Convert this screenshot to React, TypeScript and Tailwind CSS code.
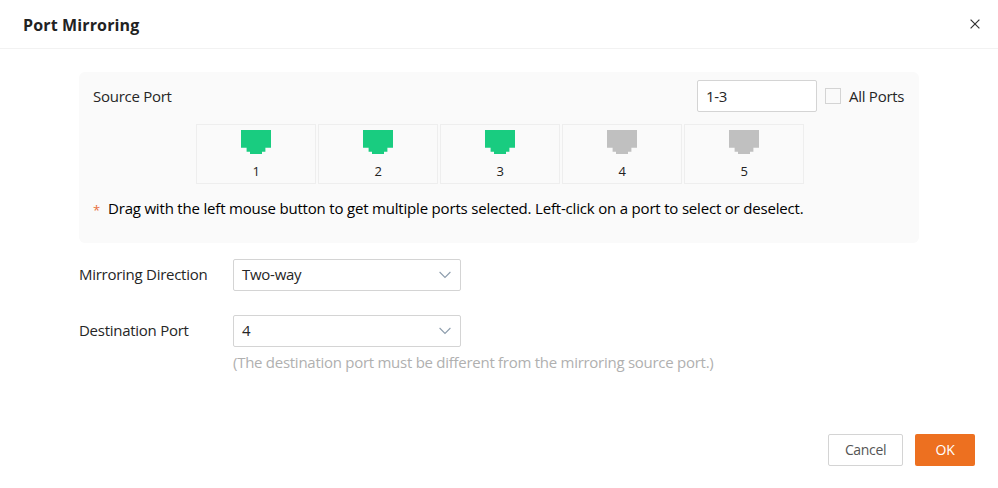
import { useState } from "react";

function PortIcon({ active }: { active: boolean }) {
  return (
    <svg
      width="30"
      height="24"
      viewBox="0 0 30 24"
      className={active ? "text-[#19cc80]" : "text-[#c0c0c0]"}
      aria-hidden="true"
    >
      <path d="M0 0H30V17.7H24.4V21.8H21V24H9V21.8H5.6V17.7H0Z" fill="currentColor" />
    </svg>
  );
}

function PortCell({ port, active, onToggle }: { port: number; active: boolean; onToggle: () => void }) {
  return (
    <button
      type="button"
      onClick={onToggle}
      className="flex h-[60px] w-[120px] flex-col items-center border border-[#eeeeee] pt-[5px]"
    >
      <PortIcon active={active} />
      <span className="mt-[9px] text-[13px] leading-4 text-[#222]">{port}</span>
    </button>
  );
}

function SelectBox({ value }: { value: string }) {
  return (
    <div className="flex h-8 w-[228px] items-center justify-between rounded-[2px] border border-[#d4d4d4] bg-white pr-[9px] pl-2">
      <span className="pb-[2px]">{value}</span>
      <svg width="12" height="8" viewBox="0 0 12 8" fill="none" aria-hidden="true">
        <path d="M0.6 1L6 6.4L11.4 1" stroke="#8c9cac" strokeWidth="1.1" />
      </svg>
    </div>
  );
}

export default function App() {
  const [selected, setSelected] = useState<number[]>([1, 2, 3]);
  const toggle = (p: number) =>
    setSelected((s) => (s.includes(p) ? s.filter((x) => x !== p) : [...s, p]));

  return (
    <div className="flex h-[488px] w-[998px] flex-col bg-white font-['Open_Sans','Noto_Sans',sans-serif] text-[15px] leading-5 tracking-[-0.27px] text-[#262626]">
      <header className="flex h-[49px] shrink-0 items-center justify-between border-b border-[#f2f2f2] pr-[18px] pl-[23px]">
        <h1 className="pt-[2px] text-[16px] font-bold tracking-[0.14px] text-[#222]">Port Mirroring</h1>
        <svg width="10" height="10" viewBox="0 0 10 10" aria-label="Close">
          <path d="M0.6 0.6L9.4 9.4M9.4 0.6L0.6 9.4" stroke="#333" strokeWidth="1.2" />
        </svg>
      </header>

      <main className="flex-1 px-[79px] pt-[23px]">
        <section className="h-[171px] rounded-[6px] bg-[#fafafa] px-[14px] pt-2">
          <div className="flex h-8 items-center">
            <span className="pb-px">Source Port</span>
            <div className="ml-auto flex h-8 w-[120px] items-center rounded-[2px] border border-[#d4d4d4] bg-white pb-px pl-2">
              1-3
            </div>
            <span className="ml-2 size-4 border border-[#d4d4d4]" />
            <span className="ml-2 w-[56px] pb-px whitespace-nowrap">All Ports</span>
          </div>
          <div className="mt-3 ml-[103px] flex gap-[2px]">
            {[1, 2, 3, 4, 5].map((p) => (
              <PortCell key={p} port={p} active={selected.includes(p)} onToggle={() => toggle(p)} />
            ))}
          </div>
          <p className="mt-[14px] flex text-black">
            <span className="w-[15px] pt-[2px] text-[13px] text-[#e8703c]">*</span>
            <span className="tracking-[-0.19px] whitespace-nowrap">
              Drag with the left mouse button to get multiple ports selected. Left-click on a port to select or
              deselect.
            </span>
          </p>
        </section>

        <div className="mt-4 flex items-center">
          <span className="w-[154px] pb-[2px]">Mirroring Direction</span>
          <SelectBox value="Two-way" />
        </div>
        <div className="mt-6 flex items-center">
          <span className="w-[154px] pb-[2px]">Destination Port</span>
          <SelectBox value="4" />
        </div>
        <p className="mt-[5px] ml-[154px] whitespace-nowrap text-[#b0b0b0]">
          (The destination port must be different from the mirroring source port.)
        </p>
      </main>

      <footer className="flex justify-end gap-3 pr-[23px] pb-[22px] text-[14px]">
        <button type="button" className="h-8 w-[75px] rounded-[2px] border border-[#d4d4d4] tracking-[-0.35px] text-[#555]">
          Cancel
        </button>
        <button type="button" className="h-8 w-[60px] rounded-[2px] bg-[#ed7020] tracking-[-0.35px] text-white">
          OK
        </button>
      </footer>
    </div>
  );
}
